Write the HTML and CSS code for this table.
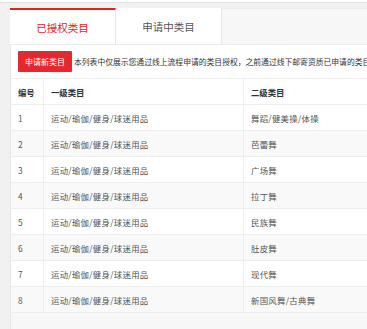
FILE: index.html
```html
<!DOCTYPE html>
<html lang="zh-CN">
<head>
    <meta charset="UTF-8">
    <title>类目管理</title>
    <link rel="stylesheet" href="styles.css">
</head>
<body>
    <div class="top-bar"></div>
    <div class="main-content">
        <div class="tab-bar">
            <div class="tab active">已授权类目</div>
            <div class="tab">申请中类目</div>
        </div>
        <div class="panel">
            <div class="toolbar">
                <button class="apply-button">申请新类目</button>
                <span class="note">本列表中仅展示您通过线上流程申请的类目授权，之前通过线下邮寄资质已申请的类目授权请联系小二查看</span>
            </div>
            <table class="cat-table">
                <thead>
                    <tr>
                        <th class="col-no">编号</th>
                        <th class="col-first">一级类目</th>
                        <th class="col-second">二级类目</th>
                    </tr>
                </thead>
                <tbody>
                    <tr><td>1</td><td>运动/瑜伽/健身/球迷用品</td><td>舞蹈/健美操/体操</td></tr>
                    <tr><td>2</td><td>运动/瑜伽/健身/球迷用品</td><td>芭蕾舞</td></tr>
                    <tr><td>3</td><td>运动/瑜伽/健身/球迷用品</td><td>广场舞</td></tr>
                    <tr><td>4</td><td>运动/瑜伽/健身/球迷用品</td><td>拉丁舞</td></tr>
                    <tr><td>5</td><td>运动/瑜伽/健身/球迷用品</td><td>民族舞</td></tr>
                    <tr><td>6</td><td>运动/瑜伽/健身/球迷用品</td><td>肚皮舞</td></tr>
                    <tr><td>7</td><td>运动/瑜伽/健身/球迷用品</td><td>现代舞</td></tr>
                    <tr><td>8</td><td>运动/瑜伽/健身/球迷用品</td><td>新国风舞/古典舞</td></tr>
                </tbody>
            </table>
            <div class="panel-footer"></div>
        </div>
    </div>
</body>
</html>
```

FILE: styles.css
```css
html, body {
    overflow: hidden;
}

body {
    margin: 0;
    padding: 0;
    background-color: #f1f1f1;
    font-family: "Noto Sans CJK SC", "Liberation Sans", sans-serif;
    color: #333;
}

.top-bar {
    height: 2px;
    background-color: #fff;
    border-bottom: 1px solid #e3e3e3;
}

.main-content {
    padding: 5px 0 0 10px;
    width: 520px;
}

.tab-bar {
    display: flex;
    height: 36px;
    background-color: #f7f7f7;
    border-top: 1px solid #ececec;
    box-sizing: border-box;
}

.tab {
    display: flex;
    align-items: center;
    justify-content: center;
    width: 105px;
    margin-top: -1px;
    background-color: #fff;
    color: #555;
    font-size: 10.5px;
    border-right: 1px solid #e8e8e8;
}

.tab.active {
    border-top: 2px solid #e2231a;
    color: #d9262b;
}

.panel {
    background-color: #fff;
    border-left: 1px solid #e6e6e6;
    border-top: 1px solid #ececec;
}

.toolbar {
    display: flex;
    align-items: center;
    padding: 6px 0 0 7px;
    white-space: nowrap;
}

.apply-button {
    width: 54px;
    height: 21px;
    padding: 0;
    border: none;
    border-radius: 1px;
    background-color: #e4282d;
    color: #fff;
    font-family: inherit;
    font-size: 8px;
}

.note {
    margin-left: 2px;
    font-size: 7.8px;
    color: #333;
}

.cat-table {
    margin-top: 6px;
    border-collapse: collapse;
    width: 510px;
    font-size: 8.4px;
}

.cat-table th,
.cat-table td {
    height: 25px;
    padding: 0 0 0 7px;
    text-align: left;
    border-top: 1px solid #eee;
    border-right: 1px solid #eee;
}

.cat-table th {
    font-weight: bold;
    color: #333;
}

.cat-table td {
    color: #555;
    letter-spacing: 0.3px;
}

.cat-table tbody tr:nth-child(even) {
    background-color: #f9f9f9;
}

.col-no {
    width: 25px;
}

.col-first {
    width: 192px;
}

.panel-footer {
    height: 20px;
    background-color: #f7f7f7;
    border-top: 1px solid #eee;
}
```
